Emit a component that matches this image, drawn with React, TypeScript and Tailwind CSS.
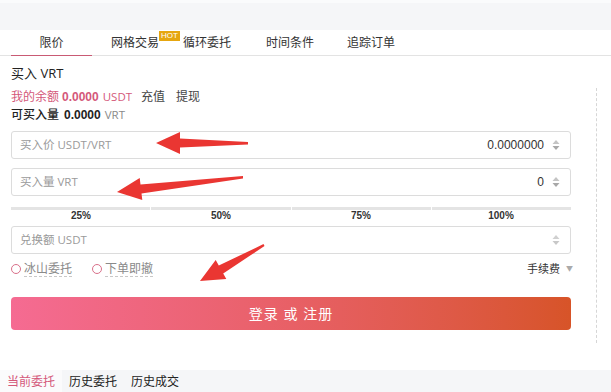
import React from "react";

const Spinner = ({ light }: { light?: boolean }) => (
  <svg width="8" height="12" viewBox="0 0 8 12" className="shrink-0">
    <path d="M4 1 L7.5 5 L0.5 5 Z" fill={light ? "#d0d0d0" : "#c4c4c4"} />
    <path d="M4 11 L7.5 7 L0.5 7 Z" fill={light ? "#c8c8c8" : "#a8a8a8"} />
  </svg>
);

type FieldProps = {
  label: string;
  value?: string;
  light?: boolean;
};

const Field = ({ label, value, light }: FieldProps) => (
  <div className="flex h-[28px] w-[560px] items-center rounded-[3px] border border-[#dcdcdc] bg-white pl-[8px] pr-[10px]">
    <span className="text-[11.5px] text-[#9a9a9a]">{label}</span>
    {value && (
      <span className="ml-auto mr-[8px] font-['Liberation_Sans',sans-serif] text-[12px] text-[#333]">
        {value}
      </span>
    )}
    <div className={value ? "" : "ml-auto"}>
      <Spinner light={light} />
    </div>
  </div>
);

const Radio = ({ label }: { label: string }) => (
  <div className="flex items-center">
    <span className="h-[10px] w-[10px] rounded-full border border-[#d9708a]" />
    <span className="ml-[3px] border-b border-dashed border-[#c8c8c8] text-[12px] leading-[14px] text-[#8a8a8a]">
      {label}
    </span>
  </div>
);

const Arrows = () => (
  <svg
    className="pointer-events-none absolute left-0 top-0"
    width="611"
    height="392"
    viewBox="0 0 611 392"
  >
    <g fill="#ea3632">
      <polygon points="156,143 180,132 180,138.5 248,142 248,144.5 180,147.5 180,154" />
      <polygon points="117,192 139.7,178 140.5,184.5 243,176 243,178.5 141.5,193.5 142.3,200" />
      <polygon points="200,281 215.7,259.9 218.8,265.6 263.5,244.1 264.5,246 223.2,273.4 226.3,279.1" />
    </g>
  </svg>
);

export default function App() {
  return (
    <div className="relative flex h-[392px] w-[611px] flex-col overflow-hidden bg-white font-['Open_Sans','Noto_Sans_CJK_SC',sans-serif] text-[#333]">
      <div className="h-[3px] bg-[#fafbfc]" />
      <div className="h-[27px] bg-[#f5f6f8]" />

      {/* order type tabs */}
      <div className="flex h-[26px] items-stretch border-b border-[#e3e3e3] text-[12px]">
        <div className="-mb-px ml-[11px] flex w-[81px] items-center justify-center border-b border-[#c95a74] text-[#333]">
          限价
        </div>
        <div className="ml-[19px] flex items-center">
          <span>网格交易</span>
          <span className="mt-[1px] self-start bg-[#e6a60f] px-[2px] font-['Liberation_Sans',sans-serif] text-[8px] leading-[10px] text-white">
            HOT
          </span>
        </div>
        <div className="ml-[3px] flex items-center">循环委托</div>
        <div className="ml-[35px] flex items-center">时间条件</div>
        <div className="ml-[33px] flex items-center">追踪订单</div>
      </div>

      <div className="flex">
        <div className="w-[571px] pl-[11px]">
          <div className="mt-[8px] text-[13px] leading-[18px] text-[#222]">买入 VRT</div>

          <div className="mt-[6px] flex items-center text-[12px] leading-[18px]">
            <span className="text-[#d4587a]">我的余额</span>
            <span className="ml-[3px] font-['Liberation_Sans',sans-serif] text-[12px] font-bold text-[#d4587a]">0.0000</span>
            <span className="ml-[4px] text-[11.5px] text-[#d4587a]">USDT</span>
            <span className="ml-[9px] text-[#444]">充值</span>
            <span className="ml-[11px] text-[#444]">提现</span>
          </div>
          <div className="flex items-center text-[12px] leading-[18px]">
            <span className="font-medium text-[#222]">可买入量</span>
            <span className="ml-[5px] font-['Liberation_Sans',sans-serif] font-bold text-[#222]">0.0000</span>
            <span className="ml-[4px] text-[11.5px] text-[#8a8a8a]">VRT</span>
          </div>

          <div className="mt-[7px]">
            <Field label="买入价 USDT/VRT" value="0.0000000" />
          </div>
          <div className="mt-[9px]">
            <Field label="买入量 VRT" value="0" />
          </div>

          {/* percentage slider */}
          <div className="mt-[11px] flex h-[3px] w-[560px] gap-[1px]">
            <div className="flex-1 bg-[#e4e4e4]" />
            <div className="flex-1 bg-[#e4e4e4]" />
            <div className="flex-1 bg-[#e4e4e4]" />
            <div className="flex-1 bg-[#e4e4e4]" />
          </div>
          <div className="grid w-[560px] grid-cols-4 text-center font-['Liberation_Sans',sans-serif] text-[10px] font-bold leading-[12px] text-[#333]">
            <span>25%</span>
            <span>50%</span>
            <span>75%</span>
            <span>100%</span>
          </div>

          <div className="mt-[4px]">
            <Field label="兑换额 USDT" light />
          </div>

          <div className="mt-[6px] flex h-[18px] w-[562px] items-center">
            <Radio label="冰山委托" />
            <div className="ml-[20px]">
              <Radio label="下单即撤" />
            </div>
            <div className="ml-auto flex items-center text-[11px] text-[#333]">
              <span>手续费</span>
              <span className="ml-[6px] text-[7px] text-[#aaa]">▼</span>
            </div>
          </div>

          <button className="mt-[19px] flex h-[33px] w-[560px] items-center justify-center rounded-[4px] bg-gradient-to-r from-[#f56b92] via-[#e86066] to-[#d75428] text-[14px] tracking-[1px] text-white">
            登录 或 注册
          </button>
        </div>
        <div className="ml-[25px] mt-[32px] h-[255px] border-l border-dashed border-[#d6d6d6]" />
      </div>

      {/* bottom order tabs */}
      <div className="mt-auto flex h-[22px] items-stretch bg-[#f5f6f8] text-[12px]">
        <div className="flex items-center bg-[#fbfbfc] px-[7px] pt-[2px] text-[#d4587a]">当前委托</div>
        <div className="flex items-center px-[7px] pt-[2px] text-[#222]">历史委托</div>
        <div className="flex items-center px-[7px] pt-[2px] text-[#222]">历史成交</div>
      </div>

      <Arrows />
    </div>
  );
}
